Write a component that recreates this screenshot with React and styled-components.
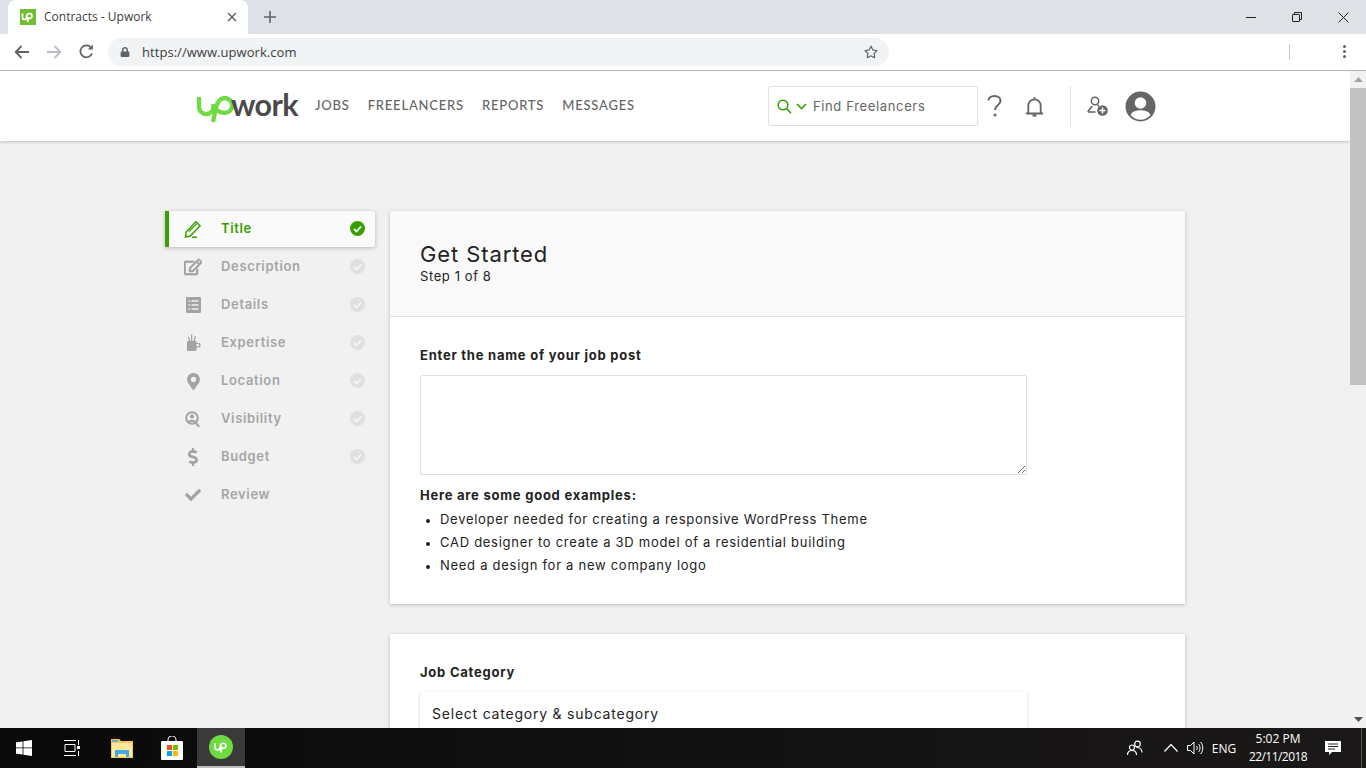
import React from "react";
import styled, { createGlobalStyle } from "styled-components";
import { FaRegEdit, FaMapMarkerAlt, FaDollarSign, FaCheck, FaRegStar, FaLock } from "react-icons/fa";

const Global = createGlobalStyle`
  html, body { margin: 0; padding: 0; height: 100%; overflow: hidden; background: #fff; }
  * { box-sizing: border-box; }
  #root { height: 100%; }
`;

const ui = `"Inter", "Noto Sans", sans-serif`;
const sys = `"Open Sans", "Noto Sans", sans-serif`;

const Shell = styled.div`
  width: 1366px; height: 768px; display: flex; flex-direction: column; overflow: hidden;
  font-family: ${ui};
`;

/* browser chrome */
const TabStrip = styled.div`
  height: 34px; background: #dee1e6; display: flex; align-items: stretch; padding-left: 8px; flex: none;
`;
const Tab = styled.div`
  width: 240px; background: #fff; border-radius: 8px 8px 0 0; display: flex; align-items: center;
  padding: 0 11px 1px 12px; font: 12px ${sys}; color: #3c4043;
`;
const TabTitle = styled.span` margin-left: 8px; flex: 1; `;
const NewTab = styled.div` margin-left: 16px; width: 16px; display: flex; align-items: center; `;
const WindowControls = styled.div` margin-left: auto; display: flex; align-items: center; `;
const WinBtn = styled.div` width: 46px; height: 28px; display: flex; align-items: center; justify-content: center; `;
const Toolbar = styled.div`
  height: 37px; background: #fff; border-bottom: 1px solid #b4b4b4; display: flex; align-items: center; flex: none; padding-bottom: 1px;
`;
const NavBtn = styled.div` width: 32px; height: 28px; display: flex; align-items: center; justify-content: center; `;
const NavGroup = styled.div` display: flex; padding-left: 6px; margin-right: 6px; `;
const Omnibox = styled.div`
  width: 781px; height: 28px; border-radius: 14px; background: #f1f3f4; display: flex; align-items: center;
  padding: 0 11px 0 12px; font: 13px ${sys}; color: #3c4043;
`;
const Url = styled.span` margin-left: 12px; flex: 1; letter-spacing: .05px; `;
const ToolSep = styled.div` width: 1px; height: 16px; background: #c9c9c9; margin-left: 400px; `;
const ToolMenu = styled.div` margin-left: 50px; width: 8px; display: flex; flex-direction: column; align-items: center; gap: 2px; `;
const Dot = styled.i` width: 3px; height: 3px; border-radius: 50%; background: #5f6368; display: block; `;

/* page */
const PageRow = styled.div` flex: 1; min-height: 0; display: flex; `;
const Page = styled.div` flex: 1; min-width: 0; background: #f1f1f1; overflow: hidden; `;
const Scrollbar = styled.div` width: 16px; background: #f1f1f1; display: flex; flex-direction: column; align-items: center; flex: none; `;
const ScrollArrow = styled.div`
  height: 17px; width: 100%; display: flex; align-items: center; justify-content: center;
`;
const Thumb = styled.div` width: 100%; height: 297px; background: #c1c1c1; `;
const ScrollGap = styled.div` flex: 1; `;

const Header = styled.header`
  height: 70px; background: #fff; box-shadow: 0 1px 3px rgba(0,0,0,.22); display: flex; align-items: center; padding-left: 196px; position: relative;
`;
const Logo = styled.div` display: flex; align-items: flex-start; width: 102px; height: 36px; margin-right: 17px; margin-top: 2px; `;
const LogoWord = styled.span`
  font: 700 30.5px/30px "Lato", ${ui}; color: #4a4a4a; letter-spacing: -.6px; margin-left: -3px;
`;
const Nav = styled.nav` display: flex; gap: 18px; margin-top: -2px; `;
const NavLink = styled.a` font: 500 13px "Lato", ${ui}; letter-spacing: .8px; color: #656565; `;
const Search = styled.div`
  margin-left: 133px; width: 210px; height: 40px; border: 1px solid #e0e0e0; border-radius: 2px; display: flex; align-items: center;
  padding-left: 8px; font-size: 13px; color: #656565; letter-spacing: .65px; background: #fff;
`;
const SearchText = styled.span` margin-left: 6px; `;
const HeadIcon = styled.div` display: flex; align-items: center; justify-content: center; flex: none; width: ${p => p.$w ? p.$w + "px" : "auto"}; margin-left: ${p => p.$ml || 0}px; `;
const HeadSep = styled.div` width: 1px; height: 41px; background: #e0e0e0; margin: 0 16px 0 12px; `;

const Content = styled.main` display: flex; gap: 15px; padding: 70px 0 0 165px; align-items: flex-start; `;
const Side = styled.aside` width: 210px; flex: none; display: flex; flex-direction: column; gap: 2px; `;
const SideItem = styled.div`
  height: 36px; display: flex; align-items: center; padding-left: ${p => p.$active ? "15px" : "19px"};
  padding-right: 10px; font-size: 13px; font-weight: 600; letter-spacing: .65px;
  color: ${p => p.$active ? "#37a000" : "#a5a5a5"};
  background: ${p => p.$active ? "#fafafa" : "transparent"};
  border-left: ${p => p.$active ? "4px solid #37a000" : "none"};
  box-shadow: ${p => p.$active ? "0 1px 4px rgba(0,0,0,.25)" : "none"};
  border-radius: ${p => p.$active ? "0 2px 2px 0" : "0"};
`;
const SideIcon = styled.span` width: 18px; height: 20px; display: flex; align-items: center; justify-content: center; margin-right: 19px; `;
const SideLabel = styled.span` flex: 1; margin-top: -2px; `;
const Tick = styled.span`
  width: 15px; height: 15px; border-radius: 50%; background: ${p => p.$on ? "#37a000" : "#e0e0e0"};
  display: flex; align-items: center; justify-content: center; color: ${p => p.$on ? "#fff" : "#f5f5f5"}; margin-top: -1px;
`;

const Cards = styled.div` width: 795px; flex: none; display: flex; flex-direction: column; gap: 30px; `;
const Card = styled.section` background: #fff; box-shadow: 0 1px 4px rgba(0,0,0,.22); `;
const CardHead = styled.div`
  height: 106px; background: #f9f9f9; border-bottom: 1px solid #e0e0e0; padding: 30px 30px 0;
`;
const Title = styled.h1` margin: 0; font: 400 22px/26px ${ui}; letter-spacing: .9px; color: #222; `;
const Step = styled.p` margin: 0; font: 400 13px/18px ${ui}; letter-spacing: .6px; color: #222; `;
const CardBody = styled.div` padding: 30px 30px 27px; `;
const CardBody2 = styled.div` padding: 30px 30px 0; height: 200px; `;
const Label = styled.div` font: 700 13px/16px ${ui}; letter-spacing: .76px; color: #222; `;
const Area = styled.textarea`
  display: block; width: 607px; height: 100px; border: 1px solid #e0e0e0; border-radius: 2px; margin: 12px 0 12px; outline: none; background: #fff;
`;
const List = styled.ul` margin: 5px 0 0; padding: 0 0 0 20px; `;
const Item = styled.li`
  font: 400 13px/23px ${ui}; letter-spacing: .72px; color: #222;
  &::marker { font-size: 11px; }
`;
const Select = styled.div`
  width: 607px; height: 60px; margin-top: 12px; padding: 12px 12px; box-shadow: 0 1px 3px rgba(0,0,0,.2); border-radius: 2px;
  font: 400 14px/20px ${ui}; letter-spacing: .78px; color: #222; background: #fff;
`;

/* taskbar */
const Taskbar = styled.footer`
  height: 40px; flex: none; display: flex; align-items: stretch; color: #fff; background: linear-gradient(90deg,#090909 0%, #0e0e0e 30%, #1b1918 100%);
`;
const TaskCell = styled.div`
  width: ${p => p.$w}px; display: flex; align-items: center; justify-content: center;
  background: ${p => p.$active ? "#3a3a3a" : "transparent"};
  border-bottom: ${p => p.$active ? "2px solid #bdbdbd" : "none"};
`;
const Tray = styled.div` margin-left: auto; display: flex; align-items: center; font: 12px ${sys}; color: #fff; `;
const TrayItem = styled.div` width: ${p => p.$w}px; display: flex; align-items: center; justify-content: center; `;
const Clock = styled.div` width: 70px; text-align: center; font: 12px/18px ${sys}; `;
const ClockDate = styled.span` letter-spacing: -.55px; `;
const ShowDesk = styled.div` width: 5px; margin-left: 8px; height: 100%; border-left: 1px solid #555; `;

const Favicon = () => (
  <svg width="16" height="16" viewBox="0 0 16 16"><rect width="16" height="16" fill="#6fbf30" />
    <g fill="none" stroke="#fff" strokeWidth="1.7"><path d="M2.500 4.500v4a2 2 0 0 0 4 0c0-2 .5-4 3-4a2.300 2.300 0 0 1 0 4.800c-1 0-2-.5-2.500-1.800M7.600 13l.9-4.500" /></g></svg>
);

const LogoUp = () => (
  <svg width="38" height="27" viewBox="0 0 38 27" fill="none" stroke="#6fda44" strokeWidth="4.300" style={{ flex: "none", marginTop: 7 }}>
    <path d="M3 1V11a7.200 7.200 0 0 0 14.400 0V8M17.400 8c1 4 5 9 11.300 9a7.500 7.500 0 0 0 0-15c-5 0-7.400 4-8.700 10L17 26" />
  </svg>
);

const g = "#a3a3a3";
const I = {
  pencil: <svg width="18" height="18" viewBox="0 0 18 18" fill="none" stroke="#37a000" strokeWidth="1.500"><path d="M2 12.200 11.800 1.800l4.300 4-9.900 10.200-4.700 1z" /><path d="M5 11.500l8-8" strokeWidth="1.100" /><path d="M8 17.200h5" /></svg>,
  edit: <FaRegEdit size={18} color={g} stroke={g} strokeWidth={24} />,
  list: <svg width="15" height="16" viewBox="0 0 15 16"><rect width="15" height="16" rx="1" fill={g} /><path d="M2.500 4h1.600M5.500 4h7M2.500 8h1.600M5.500 8h7M2.500 12h1.600M5.500 12h7" stroke="#f1f1f1" strokeWidth="1.300" /></svg>,
  mug: <svg width="15" height="18" viewBox="0 0 15 18" fill={g}><rect x="1" y="7" width="9.500" height="10" rx="1" /><path d="M10 9h3a1.500 1.500 0 0 1 1.500 1.500V12a1.500 1.500 0 0 1-1.500 1.500h-3v-1.200h2.500a.6.6 0 0 0 .6-.6v-1a.6.6 0 0 0-.6-.6H10z" /><path d="M3 7 1.700 3l1.200-.4L4.400 7zM5 7V.6h1.300V7zM7.500 7l1.300-5 1.200.3L8.900 7z" /></svg>,
  pin: <FaMapMarkerAlt size={17} color={g} />,
  search: <svg width="16" height="17" viewBox="0 0 16 17"><circle cx="7" cy="7" r="5.800" fill="none" stroke={g} strokeWidth="2" /><circle cx="7" cy="5.500" r="2.100" fill={g} /><path d="M2.800 11a4.300 3 0 0 1 8.400 0z" fill={g} /><path d="m10.500 11.500 3.600 4.300" stroke={g} strokeWidth="2" /></svg>,
  dollar: <FaDollarSign size={18} color={g} />,
  check: <FaCheck size={16} color={g} />,
};

const steps = [
  ["Title", I.pencil, true, true], ["Description", I.edit, true], ["Details", I.list, true],
  ["Expertise", I.mug, true], ["Location", I.pin, true], ["Visibility", I.search, true],
  ["Budget", I.dollar, true], ["Review", I.check, false],
];
const examples = [
  "Developer needed for creating a responsive WordPress Theme",
  "CAD designer to create a 3D model of a residential building",
  "Need a design for a new company logo",
];

export default function App() {
  return (
    <Shell>
      <Global />
      <TabStrip>
        <Tab>
          <Favicon />
          <TabTitle>Contracts - Upwork</TabTitle>
          <svg width="10" height="10" viewBox="0 0 10 10" stroke="#5f6368" strokeWidth="1.500"><path d="m1 1 8 8M9 1 1 9" /></svg>
        </Tab>
        <NewTab><svg width="12" height="12" viewBox="0 0 12 12" stroke="#5f6368" strokeWidth="1.600"><path d="M6 0v12M0 6h12" /></svg></NewTab>
        <WindowControls>
          <WinBtn><svg width="10" height="10" viewBox="0 0 10 10" stroke="#222"><path d="M0 5.500h10" /></svg></WinBtn>
          <WinBtn><svg width="10" height="10" viewBox="0 0 10 10" fill="none" stroke="#222"><rect x=".5" y="2.500" width="7" height="7" rx=".5" /><path d="M2.500 2.500V.5h7v7h-2" /></svg></WinBtn>
          <WinBtn><svg width="11" height="11" viewBox="0 0 11 11" stroke="#222"><path d="m.5.5 10 10M10.500.5l-10 10" /></svg></WinBtn>
        </WindowControls>
      </TabStrip>
      <Toolbar>
        <NavGroup>
          <NavBtn><svg width="16" height="14" viewBox="0 0 16 14" fill="none" stroke="#5f6368" strokeWidth="1.800"><path d="M15 7H2M7.500 1 1.700 7l5.800 6" /></svg></NavBtn>
          <NavBtn><svg width="16" height="14" viewBox="0 0 16 14" fill="none" stroke="#b9bcc0" strokeWidth="1.800"><path d="M1 7h13M8.500 1l5.800 6-5.800 6" /></svg></NavBtn>
          <NavBtn><svg width="15" height="15" viewBox="0 0 15 15" fill="none" stroke="#5f6368" strokeWidth="1.800"><path d="M13 9.500A6 6 0 1 1 12 3.500" /><path d="M13.800.5v5h-5z" fill="#5f6368" stroke="none" /></svg></NavBtn>
        </NavGroup>
        <Omnibox>
          <FaLock size={10} color="#5f6368" />
          <Url>https://www.upwork.com</Url>
          <FaRegStar size={14} color="#5f6368" />
        </Omnibox>
        <ToolSep />
        <ToolMenu><Dot /><Dot /><Dot /></ToolMenu>
      </Toolbar>

      <PageRow>
        <Page>
          <Header>
            <Logo><LogoUp /><LogoWord>work</LogoWord></Logo>
            <Nav>
              <NavLink>JOBS</NavLink><NavLink>FREELANCERS</NavLink><NavLink>REPORTS</NavLink><NavLink>MESSAGES</NavLink>
            </Nav>
            <Search>
              <svg width="15" height="15" viewBox="0 0 15 15" fill="none" stroke="#37a000" strokeWidth="1.600"><circle cx="6" cy="6" r="4.800" /><path d="m9.500 9.500 4.500 4.800" /></svg>
              <svg width="11" height="7" viewBox="0 0 11 7" fill="none" stroke="#37a000" strokeWidth="1.600" style={{ marginLeft: 4 }}><path d="m1 1 4.500 4.500L10 1" /></svg>
              <SearchText>Find Freelancers</SearchText>
            </Search>
            <HeadIcon $w={34}>
              <svg width="15" height="22" viewBox="0 0 15 22" fill="none" stroke="#656565" strokeWidth="2"><path d="M1.500 5.500C1.500 3 4 1 7.500 1s6 2 6 5c0 4-5.500 4-5.500 9" /><circle cx="8" cy="20" r=".6" fill="#656565" /></svg>
            </HeadIcon>
            <HeadIcon $w={46}>
              <svg width="19" height="21" viewBox="0 0 19 21" fill="none" stroke="#656565" strokeWidth="1.800"><path d="M1 17.500h17M3.300 17.500v-8a6.200 6.200 0 0 1 12.400 0v8M9.500 1v2" /><path d="M7.500 19.500h4" strokeWidth="2.200" /></svg>
            </HeadIcon>
            <HeadSep />
            <HeadIcon>
              <svg width="21" height="20" viewBox="0 0 21 20" fill="none" stroke="#656565" strokeWidth="1.500"><circle cx="8" cy="5" r="3.700" /><path d="M1 16c0-2.500 3.500-3.500 4-6M11 8.500c0 1 .3 1.500 1 2M1 16h7.500" /><circle cx="15.500" cy="14.500" r="5.300" fill="#656565" stroke="none" /><path d="M15.500 11.500v6M12.500 14.500h6" stroke="#fff" strokeWidth="1.500" /></svg>
            </HeadIcon>
            <HeadIcon $ml={17}>
              <svg width="31" height="31" viewBox="0 0 31 31"><circle cx="15.500" cy="15.500" r="15" fill="#656565" /><circle cx="15.500" cy="12" r="5.800" fill="#fff" /><path d="M5.500 24c2-4 6-4.800 10-4.800s8 .8 10 4.800a13 13 0 0 1-20 0z" fill="#fff" /></svg>
            </HeadIcon>
          </Header>
          <Content>
            <Side>
              {steps.map(([name, icon, tick, active]) => (
                <SideItem key={name} $active={active}>
                  <SideIcon>{icon}</SideIcon>
                  <SideLabel>{name}</SideLabel>
                  {tick && <Tick $on={active}><svg width="9" height="8" viewBox="0 0 9 8" fill="none" stroke="currentColor" strokeWidth="1.800"><path d="m1 4 2.500 2.500L8 1.500" /></svg></Tick>}
                </SideItem>
              ))}
            </Side>
            <Cards>
              <Card>
                <CardHead>
                  <Title>Get Started</Title>
                  <Step>Step 1 of 8</Step>
                </CardHead>
                <CardBody>
                  <Label>Enter the name of your job post</Label>
                  <Area />
                  <Label>Here are some good examples:</Label>
                  <List>{examples.map(e => <Item key={e}>{e}</Item>)}</List>
                </CardBody>
              </Card>
              <Card>
                <CardBody2>
                  <Label>Job Category</Label>
                  <Select>Select category &amp; subcategory</Select>
                </CardBody2>
              </Card>
            </Cards>
          </Content>
        </Page>
        <Scrollbar>
          <ScrollArrow><svg width="9" height="5" viewBox="0 0 9 5"><path d="M4.500 0 9 5H0z" fill="#a3a3a3" /></svg></ScrollArrow>
          <Thumb />
          <ScrollGap />
          <ScrollArrow><svg width="9" height="5" viewBox="0 0 9 5"><path d="M4.500 5 9 0H0z" fill="#505050" /></svg></ScrollArrow>
        </Scrollbar>
      </PageRow>

      <Taskbar>
        <TaskCell $w={48}>
          <svg width="16" height="16" viewBox="0 0 16 16" fill="#fff"><path d="M0 2.300 6.600 1.400v6.100H0zM7.400 1.300 16 0v7.500H7.400zM0 8.300h6.600v6.300L0 13.700zM7.400 8.300H16V16l-8.600-1.300z" /></svg>
        </TaskCell>
        <TaskCell $w={49}>
          <svg width="17" height="16" viewBox="0 0 17 16" fill="none" stroke="#fff"><path d="M0 .5h12M0 15.500h12M1 4.500h10v7H1zM14.500 0v5M14.500 11v5" /><rect x="13" y="6" width="3" height="3" fill="#fff" stroke="none" /></svg>
        </TaskCell>
        <TaskCell $w={50}>
          <svg width="22" height="20" viewBox="0 0 22 20"><path d="M0 1h8l2 2h12v17H0z" fill="#f5c95c" /><path d="M1 5h20v14H1z" fill="#ffe79b" /><path d="M4 19v-7h14v7h-3v-3H7v3z" fill="#3fa9e0" /><rect x="1" y="2" width="6" height="1.500" fill="#3fa9e0" /></svg>
        </TaskCell>
        <TaskCell $w={50}>
          <svg width="22" height="24" viewBox="0 0 22 24"><path d="M7 6V4a4 4 0 0 1 8 0v2" fill="none" stroke="#ddd" strokeWidth="1.200" /><rect y="5" width="22" height="19" rx="1" fill="#fff" /><rect x="6" y="9" width="5" height="5" fill="#f25022" /><rect x="12" y="9" width="5" height="5" fill="#7fba00" /><rect x="6" y="15" width="5" height="5" fill="#00a4ef" /><rect x="12" y="15" width="5" height="5" fill="#ffb900" /></svg>
        </TaskCell>
        <TaskCell $w={48} $active>
          <svg width="24" height="24" viewBox="0 0 24 24"><circle cx="12" cy="12" r="12" fill="#6fda44" /><g transform="translate(4.500 4.500) scale(.62)"><path d="M2.500 6v6.500a4.200 4.200 0 0 0 8.400 0c0-3 1-6.500 5-6.500a4 4 0 0 1 0 8.200c-2 0-3.400-1.400-4.200-3M11.800 21l1.600-8" fill="none" stroke="#fff" strokeWidth="2.600" /></g></svg>
        </TaskCell>
        <Tray>
          <TrayItem $w={44}>
            <svg width="16" height="16" viewBox="0 0 16 16" fill="none" stroke="#fff" strokeWidth="1.200"><circle cx="10.500" cy="4" r="2.800" /><circle cx="5" cy="7.500" r="2.500" /><path d="M.5 15c0-3 2-4.500 4.500-4.500S9.500 12 9.500 15M9.500 7.500c2.500 0 5.500 1.500 5.500 5" /></svg>
          </TrayItem>
          <TrayItem $w={28}>
            <svg width="14" height="8" viewBox="0 0 14 8" fill="none" stroke="#fff" strokeWidth="1.200"><path d="m.5 7.500 6.500-7 6.500 7" /></svg>
          </TrayItem>
          <TrayItem $w={20}>
            <svg width="17" height="14" viewBox="0 0 17 14" fill="none" stroke="#fff"><path d="M.5 4.500h3l3.500-3.500v12L3.500 9.500h-3zM9.500 5c1 1 1 3 0 4M11.500 3c2 2 2 6 0 8M13.500 1c3 3 3 9 0 12" /></svg>
          </TrayItem>
          <TrayItem $w={38}>ENG</TrayItem>
          <Clock>5:02 PM<br /><ClockDate>22/11/2018</ClockDate></Clock>
          <TrayItem $w={40}>
            <svg width="16" height="15" viewBox="0 0 16 15"><path d="M0 0h16v11H7l-3 3v-3H0z" fill="#fff" /><path d="M3 3h10M3 5.500h10M3 8h7" stroke="#222" /></svg>
          </TrayItem>
          <ShowDesk />
        </Tray>
      </Taskbar>
    </Shell>
  );
}
